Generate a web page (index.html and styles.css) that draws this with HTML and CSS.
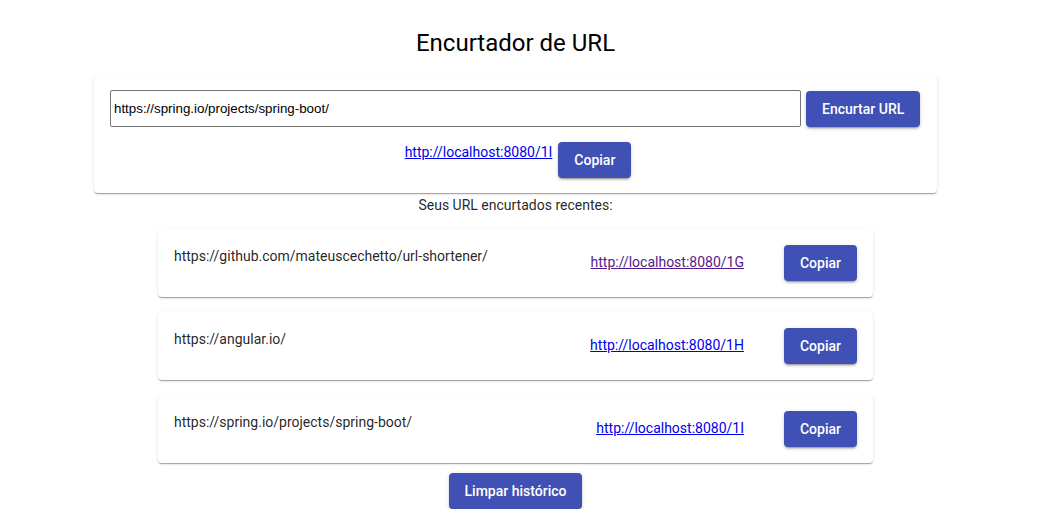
FILE: index.html
```html
<!DOCTYPE html>
<html lang="pt">
<head>
<meta charset="utf-8">
<title>Encurtador de URL</title>
<link rel="stylesheet" href="styles.css">
</head>
<body>
<div class="page">
  <h1 class="title">Encurtador de URL</h1>
  <div class="card main-card">
    <div class="input-row">
      <input class="url-input" type="text" value="https://spring.io/projects/spring-boot/">
      <button class="btn">Encurtar URL</button>
    </div>
    <div class="result-row">
      <a class="link" href="#">http://localhost:8080/1I</a>
      <button class="btn">Copiar</button>
    </div>
  </div>
  <p class="recent">Seus URL encurtados recentes:</p>
  <div class="list">
    <div class="card item">
      <span class="orig">https://github.com/mateuscechetto/url-shortener/</span>
      <a class="link visited" href="#">http://localhost:8080/1G</a>
      <button class="btn">Copiar</button>
    </div>
    <div class="card item">
      <span class="orig">https://angular.io/</span>
      <a class="link" href="#">http://localhost:8080/1H</a>
      <button class="btn">Copiar</button>
    </div>
    <div class="card item">
      <span class="orig">https://spring.io/projects/spring-boot/</span>
      <a class="link" href="#">http://localhost:8080/1I</a>
      <button class="btn">Copiar</button>
    </div>
  </div>
  <div class="clear-row">
    <button class="btn">Limpar histórico</button>
  </div>
</div>
</body>
</html>
```

FILE: styles.css
```css
html, body {
  margin: 0;
  padding: 0;
  background: #ffffff;
}
body {
  font-family: Roboto, "Helvetica Neue", sans-serif;
  color: rgba(0, 0, 0, 0.87);
  font-size: 14px;
}
.page {
  width: 1031px;
  display: flex;
  flex-direction: column;
  align-items: center;
}
.title {
  margin: 27px 0 0 0;
  font-size: 24px;
  font-weight: 400;
  line-height: 32px;
  color: #000;
}
.card {
  background: #fff;
  border-radius: 4px;
  box-shadow: 0 2px 1px -1px rgba(0,0,0,.2), 0 1px 1px 0 rgba(0,0,0,.14), 0 1px 3px 0 rgba(0,0,0,.12);
  box-sizing: border-box;
}
.main-card {
  margin-top: 16px;
  width: 843px;
  padding: 15px 16px 15px 16px;
}
.input-row {
  display: flex;
  align-items: flex-start;
  gap: 5px;
}
.url-input {
  width: 691px;
  height: 37px;
  box-sizing: border-box;
  border: 1px solid #767676;
  border-radius: 2px;
  padding: 1px 3px;
  font-family: "Liberation Sans", Arial, sans-serif;
  font-size: 13.333px;
  color: #000;
}
.btn {
  font-family: Roboto, "Helvetica Neue", sans-serif;
  font-size: 14px;
  font-weight: 500;
  color: #fff;
  background: #3f51b5;
  border: none;
  border-radius: 4px;
  height: 36px;
  line-height: 36px;
  padding: 0 16px;
  box-shadow: 0 3px 1px -2px rgba(0,0,0,.2), 0 2px 2px 0 rgba(0,0,0,.14), 0 1px 5px 0 rgba(0,0,0,.12);
  cursor: pointer;
}
.input-row .btn {
  margin-top: 1px;
}
.result-row {
  display: flex;
  justify-content: center;
  align-items: flex-start;
  gap: 6px;
  margin-top: 15px;
  padding-left: 5px;
}
.link {
  color: #0000ee;
  text-decoration: underline;
  font-size: 14px;
  line-height: 20px;
}
.link.visited {
  color: #551a8b;
}
.recent {
  margin: 2px 0 0 0;
  line-height: 20px;
  font-size: 14px;
}
.list {
  margin-top: 14px;
  display: flex;
  flex-direction: column;
  gap: 15px;
}
.item {
  width: 715px;
  padding: 16px;
  display: flex;
  align-items: flex-start;
}
.orig {
  flex: 1;
  line-height: 20px;
  margin-top: 1px;
}
.item .link {
  margin-top: 7px;
}
.item .btn {
  margin-left: 40px;
}
.clear-row {
  margin-top: 10px;
  display: flex;
  justify-content: center;
}
```
